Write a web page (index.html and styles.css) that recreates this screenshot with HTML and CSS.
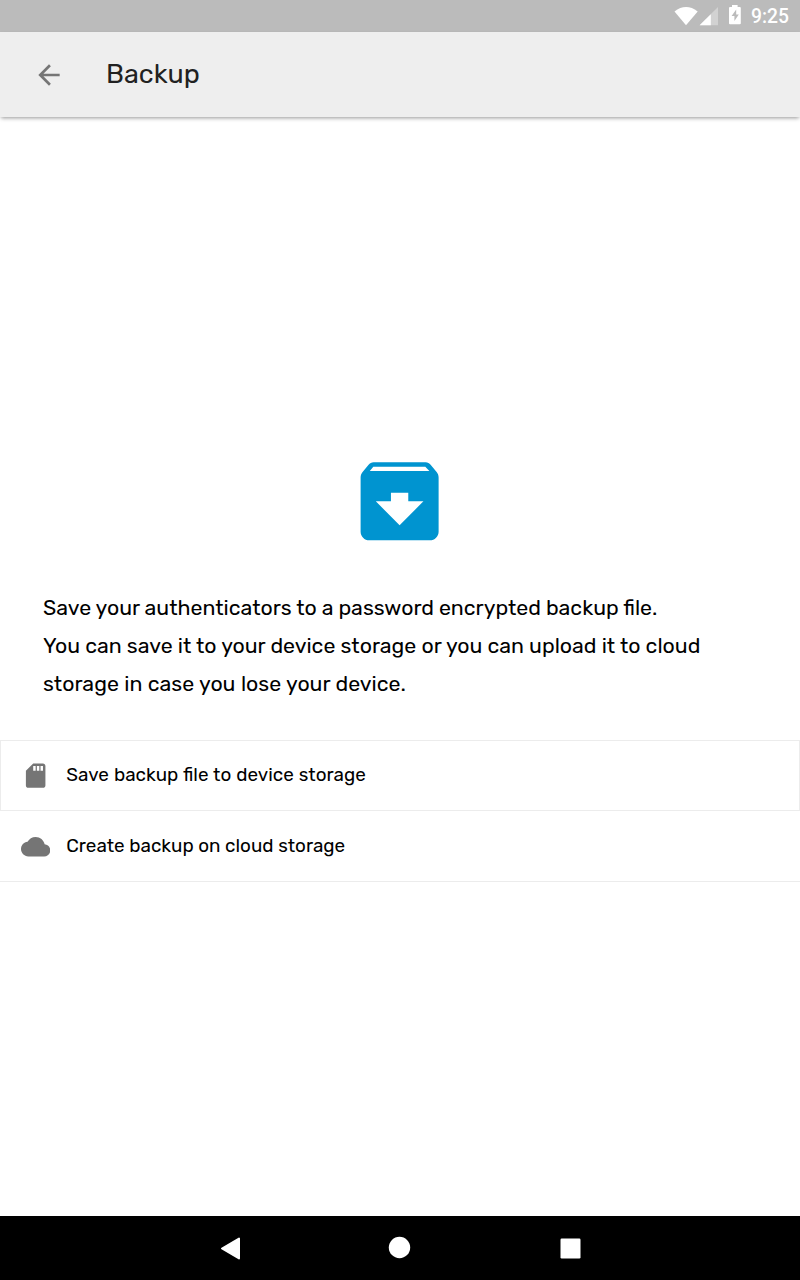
FILE: index.html
```html
<!DOCTYPE html>
<html lang="en">
<head>
<meta charset="utf-8">
<title>Backup</title>
<link rel="stylesheet" href="styles.css">
</head>
<body>
<div class="screen">
  <div class="status">
    <svg class="status-icons" width="70" height="32" viewBox="0 0 70 32">
      <path d="M1.5 11.4Q13 2.6 24.7 11.4L13 25.2Z" fill="#fff"/>
      <path d="M26.6 25.3L45 7V25.3Z" fill="#fff" fill-opacity=".35"/>
      <path d="M26.6 25.3L37.8 14.3V25.3Z" fill="#fff"/>
      <path fill-rule="evenodd" d="M59 5h5.6V7h2.2q1 0 1 1v15.2q0 1-1 1H57q-1 0-1-1V8q0-1 1-1h2zM63.2 9.6L58.6 16h2.8v5l4.4-6.6h-2.6z" fill="#fff"/>
    </svg>
    <span class="clock">9:25</span>
  </div>
  <header class="appbar">
    <svg class="back" width="32" height="32" viewBox="0 0 24 24"><path d="M20 11H7.83l5.59-5.59L12 4l-8 8 8 8 1.41-1.41L7.83 13H20v-2z"/></svg>
    <h1 class="title">Backup</h1>
  </header>
  <main class="content">
    <svg class="hero" width="104" height="104" viewBox="0 0 24 24"><path transform="translate(-.09 .08)" d="M20.54 5.23l-1.39-1.68C18.88 3.21 18.47 3 18 3H6c-.47 0-.88.21-1.16.55L3.46 5.23C3.17 5.57 3 6.02 3 6.5V19c0 1.1.9 2 2 2h14c1.1 0 2-.9 2-2V6.5c0-.48-.17-.93-.46-1.27zM12 17.5L6.5 12H10v-2h4v2h3.5L12 17.5zM5.12 5l.81-1h12l.94 1H5.12z"/></svg>
    <p class="intro">
      <span class="line line-a">Save your authenticators to a password encrypted backup file.</span>
      <span class="line line-b">You can save it to your device storage or you can upload it to cloud</span>
      <span class="line line-c">storage in case you lose your device.</span>
    </p>
    <ul class="options">
      <li class="option option-device">
        <svg class="option-icon" width="29.3" height="29.3" viewBox="0 0 24 24"><path d="M18 2h-8L4.02 8 4 20c0 1.1.9 2 2 2h12c1.1 0 2-.9 2-2V4c0-1.1-.9-2-2-2zm-6 6h-2V4h2v4zm3 0h-2V4h2v4zm3 0h-2V4h2v4z"/></svg>
        <span class="label label-device">Save backup file to device storage</span>
      </li>
      <li class="option option-cloud">
        <svg class="option-icon" width="29.3" height="29.3" viewBox="0 0 24 24"><path d="M19.35 10.04C18.67 6.59 15.64 4 12 4 9.11 4 6.6 5.64 5.35 8.04 2.34 8.36 0 10.91 0 14c0 3.31 2.69 6 6 6h13c2.76 0 5-2.24 5-5 0-2.64-2.05-4.78-4.65-4.96z"/></svg>
        <span class="label">Create backup on cloud storage</span>
      </li>
    </ul>
  </main>
  <nav class="navbar">
    <svg width="400" height="64" viewBox="0 0 400 64">
      <path d="M22 32.5L39 22.5V42.5Z" fill="#fff" stroke="#fff" stroke-width="2" stroke-linejoin="round"/>
      <circle cx="199.5" cy="31.5" r="10.7" fill="#fff"/>
      <rect x="360.5" y="22.5" width="20" height="20" rx="1.2" fill="#fff"/>
    </svg>
  </nav>
</div>
</body>
</html>
```
FILE: styles.css
```css
body {
  margin: 0;
  font-family: Rubik, Roboto, "Noto Sans", sans-serif;
  background: #fff;
  color: #000;
}
.screen {
  display: flex;
  flex-direction: column;
  width: 800px;
  height: 1280px;
  overflow: hidden;
}
.status {
  display: flex;
  justify-content: flex-end;
  height: 32px;
  background: #bbb;
}
.status-icons { margin-right: 8px; }
.clock {
  width: 49px;
  color: #fff;
  font: 500 19.3px/33px Roboto, sans-serif;
}
.appbar {
  display: flex;
  align-items: center;
  height: 85px;
  padding-left: 33px;
  background: #eee;
  box-shadow: 0 2px 4px -1px rgba(0, 0, 0, 0.42);
}
.back { fill: #757575; }
.title {
  margin: -2px 0 0 41px;
  font-size: 26.9px;
  font-weight: 400;
  line-height: 32px;
  color: #212121;
}
.content {
  display: flex;
  flex: 1;
  flex-direction: column;
}
.hero {
  margin: 332px 0 0 348px;
  fill: #0094d0;
}
.intro {
  margin: 36px 0 37px 43px;
  font-size: 21.33px;
  line-height: 38px;
}
.line {
  display: block;
  width: max-content;
  white-space: nowrap;
}
.line-a { word-spacing: -0.3px; }
.line-b { word-spacing: -0.08px; }
.line-c { word-spacing: 0.2px; }
.options {
  margin: 0;
  padding: 0;
  list-style: none;
}
.option {
  box-sizing: border-box;
  display: flex;
  align-items: center;
  gap: 16px;
  height: 71px;
  padding-left: 21px;
  border-bottom: 1px solid #ececec;
  font-size: 18.87px;
  line-height: 24px;
}
.option-device {
  padding-left: 20px;
  border: 1px solid #ececec;
}
.option-icon {
  margin-top: 1px;
  fill: #757575;
}
.label { white-space: nowrap; }
.label-device {
  margin-top: -2px;
  word-spacing: 0.4px;
}
.navbar {
  display: flex;
  justify-content: center;
  height: 64px;
  background: #000;
}
```
